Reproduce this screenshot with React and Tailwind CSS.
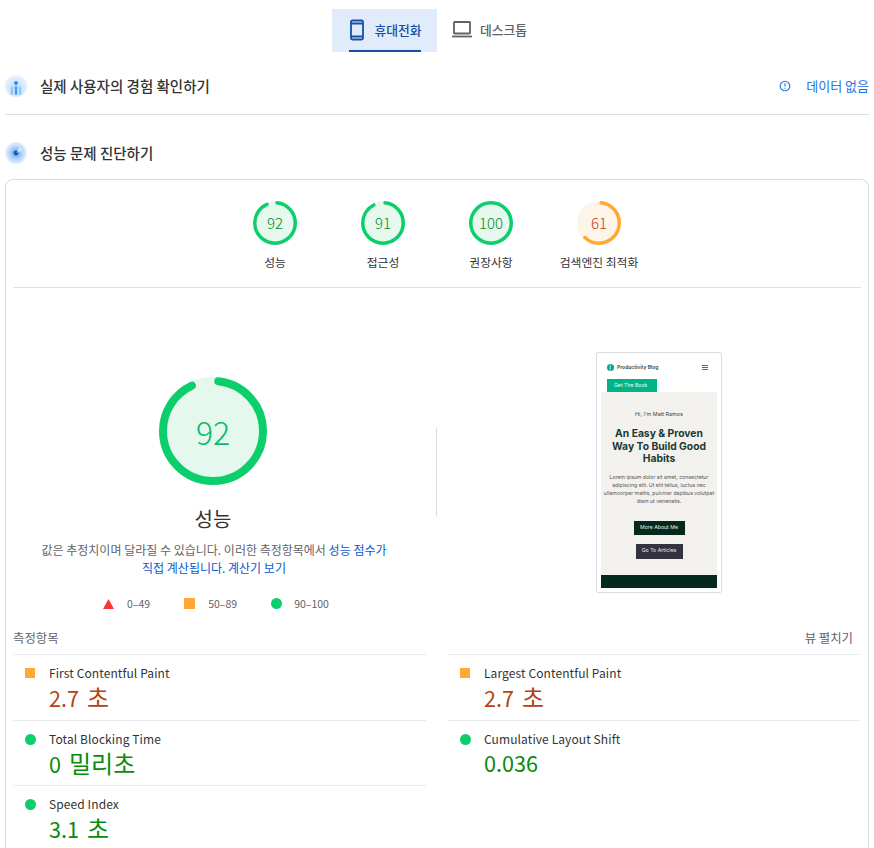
const Gauge = ({ score, size, stroke, color, fill, textClass }) => {
  const r = (size - stroke) / 2;
  const c = 2 * Math.PI * r;
  const full = score === 100;
  return (
    <div className="relative shrink-0" style={{ width: size, height: size }}>
      <svg width={size} height={size} className="-rotate-90">
        <circle cx={size / 2} cy={size / 2} r={r + stroke / 2} fill={fill} />
        <circle
          cx={size / 2}
          cy={size / 2}
          r={r}
          fill="none"
          stroke={color}
          strokeWidth={stroke}
          strokeLinecap="round"
          strokeDasharray={`${c * (full ? 1 : score / 100 - 0.008)} ${c}`}
          strokeDashoffset={full ? 0 : -c * 0.017}
        />
      </svg>
      <div className={`absolute inset-0 flex items-center justify-center ${textClass}`}>{score}</div>
    </div>
  );
};

const SmallScore = ({ score, label, color, fill, textColor }) => (
  <div className="flex flex-col items-center w-[108px]">
    <Gauge score={score} size={44} stroke={3.5} color={color} fill={fill} textClass={`text-[15px] font-light ${textColor}`} />
    <div className="mt-[9px] text-[11.8px] leading-[16px] text-[#333] whitespace-nowrap">{label}</div>
  </div>
);

const Square = () => <div className="w-[10px] h-[10px] bg-[#ffa933]" />;
const Dot = () => <div className="w-[11px] h-[11px] rounded-full bg-[#0cce6b]" />;

const Metric = ({ label, value, unit, good }) => (
  <div className="h-[65.5px] border-t border-[#e8eaed] pl-[12px] flex">
    <div className="w-[24px] pt-[13px] shrink-0">{good ? <Dot /> : <Square />}</div>
    <div className="pt-[9px]">
      <div className="text-[12px] leading-[18px] text-[#333] tracking-[0.1px]">{label}</div>
      <div className={`flex items-baseline leading-[30px] ${good ? "text-[#0a8a0a]" : "text-[#b5420f]"}`}>
        <span className="text-[21.6px]">{value}</span>
        {unit && <span className="ml-[8px] text-[24px]">{unit}</span>}
      </div>
    </div>
  </div>
);

const FieldIcon = () => (
  <svg width="22" height="22" viewBox="0 0 22 22" className="shrink-0">
    <defs>
      <radialGradient id="fieldBg" cx="50%" cy="60%" r="55%">
        <stop offset="0%" stopColor="#b5d8f8" />
        <stop offset="100%" stopColor="#e8f2fd" />
      </radialGradient>
    </defs>
    <circle cx="11" cy="11" r="11" fill="url(#fieldBg)" />
    <circle cx="11" cy="8" r="1.8" fill="#1a73e8" />
    <rect x="9.8" y="11" width="2.4" height="9" rx="1" fill="#4da0ee" />
    <rect x="5.8" y="12" width="2" height="8" rx="1" fill="#8cc3f4" />
    <rect x="14.2" y="12" width="2" height="8" rx="1" fill="#8cc3f4" />
  </svg>
);

const LabIcon = () => (
  <svg width="22" height="22" viewBox="0 0 22 22" className="shrink-0">
    <defs>
      <radialGradient id="labBg" cx="50%" cy="50%" r="50%">
        <stop offset="0%" stopColor="#5f9fef" />
        <stop offset="60%" stopColor="#b9d6f8" />
        <stop offset="100%" stopColor="#e8f2fd" />
      </radialGradient>
    </defs>
    <circle cx="11" cy="11" r="11" fill="url(#labBg)" />
    <circle cx="11" cy="11" r="2.4" fill="#1558c0" />
    <path d="M11 11 L15 5 A7 7 0 0 1 17 9 Z" fill="#ffffff" opacity="0.55" />
  </svg>
);

const PagePreview = () => (
  <div className="w-[126px] h-[241px] border border-[#dadce0] rounded-[2px] bg-white overflow-hidden shrink-0 flex flex-col px-[4px] font-['Inter',sans-serif]">
    <div className="h-[26px] shrink-0 flex items-center justify-between pl-[6px] pr-[9px] pt-[3px]">
      <div className="flex items-center gap-[3px]">
        <svg width="7" height="7" viewBox="0 0 7 7">
          <circle cx="3.5" cy="3.5" r="3.5" fill="#0aa37f" />
          <path d="M3.2 0.5v6" stroke="#fff" strokeWidth="0.7" />
        </svg>
        <span className="text-[5px] font-semibold text-[#2a4a43]">Productivity Blog</span>
      </div>
      <div className="w-[6px] flex flex-col gap-[1px]">
        <div className="h-[1px] bg-[#666]" />
        <div className="h-[1px] bg-[#666]" />
        <div className="h-[1px] bg-[#666]" />
      </div>
    </div>
    <div className="ml-[6px] w-[50px] h-[13px] shrink-0 bg-[#00b488] flex items-center pl-[7px] text-[5.2px] text-[#e6fff8]">Get The Book</div>
    <div className="h-[183px] shrink-0 bg-[#f3f1ed] flex flex-col items-center text-center">
      <div className="mt-[19px] text-[5.4px] leading-[6px] text-[#444]">Hi, I'm Matt Ramos</div>
      <div className="mt-[10px] text-[10.3px] leading-[12.5px] font-bold text-[#1a3a33] w-[110px]">An Easy &amp; Proven Way To Build Good Habits</div>
      <div className="mt-[8px] text-[5.2px] leading-[8px] text-[#555] w-[114px]">Lorem ipsum dolor sit amet, consectetur adipiscing elit. Ut elit tellus, luctus nec ullamcorper mattis, pulvinar dapibus volutpat diam ut venenatis.</div>
      <div className="mt-[16px] w-[51px] h-[14px] bg-[#06291f] text-[#e6eeeb] text-[5.2px] flex items-center justify-center">More About Me</div>
      <div className="mt-[9px] w-[47px] h-[15px] bg-[#333340] text-[#e6e6ea] text-[5.2px] flex items-center justify-center">Go To Articles</div>
    </div>
    <div className="h-[13px] shrink-0 bg-[#06291f]" />
  </div>
);

export default function App() {
  return (
    <div className="w-[874px] h-[848px] overflow-hidden bg-white font-['Noto_Sans_CJK_KR','Noto_Sans',sans-serif] text-[#202124]">
      <div className="flex justify-center pt-[9px]">
        <div className="w-[105px] h-[43px] bg-[#e1ecfa] flex flex-col items-center">
          <div className="flex-1 flex items-center gap-[9px] pl-[2px] text-[12.8px] font-medium text-[#174ea6]">
            <svg width="16" height="22" viewBox="0 0 16 22" fill="none" stroke="#174ea6" strokeWidth="1.8">
              <rect x="2" y="1.5" width="12" height="19" rx="1.5" />
              <path d="M2 4.5h12M2 17.5h12" />
            </svg>
            휴대전화
          </div>
          <div className="w-[72px] h-[2px] bg-[#174ea6]" />
        </div>
        <div className="w-[105px] h-[43px] flex items-center pl-[15px] gap-[8px] pb-[2px] text-[12.8px] font-medium text-[#5f6368]">
          <svg width="20" height="17" viewBox="0 0 20 17" fill="none" stroke="#5f6368" strokeWidth="1.8">
            <rect x="2" y="1" width="16" height="11.5" rx="0.5" />
            <path d="M0 15.5h20" />
          </svg>
          데스크톱
        </div>
      </div>

      <div className="mx-[5px]">
        <div className="h-[63px] flex items-center border-b border-[#dadce0] pt-[6px]">
          <FieldIcon />
          <div className="ml-[13px] text-[14.5px] font-medium text-[#333]">실제 사용자의 경험 확인하기</div>
          <div className="ml-auto flex items-center gap-[15px] text-[13px] text-[#1a73e8]">
            <svg width="12" height="12" viewBox="0 0 12 12" fill="none" stroke="#1a73e8" strokeWidth="1.1">
              <circle cx="6" cy="6" r="4.8" />
              <path d="M6 3.2v3.4M6 7.8v1" />
            </svg>
            데이터 없음
          </div>
        </div>
        <div className="h-[64px] flex items-center pt-[12px]">
          <LabIcon />
          <div className="ml-[13px] text-[14.5px] font-medium text-[#333]">성능 문제 진단하기</div>
        </div>

        <div className="h-[800px] border border-[#dadce0] rounded-[8px] px-[7px] pt-[21px]">
          <div className="h-[87px] border-b border-[#e0e0e0] flex justify-center">
            <div className="flex">
              <SmallScore score={92} label="성능" color="#0cce6b" fill="#e7f9ef" textColor="text-[#0a8a0a]" />
              <SmallScore score={91} label="접근성" color="#0cce6b" fill="#e7f9ef" textColor="text-[#0a8a0a]" />
              <SmallScore score={100} label="권장사항" color="#0cce6b" fill="#e7f9ef" textColor="text-[#0a8a0a]" />
              <SmallScore score={61} label="검색엔진 최적화" color="#ffa933" fill="#fff4e8" textColor="text-[#b5420f]" />
            </div>
          </div>

          <div className="h-[342px] flex">
            <div className="w-[400px] flex flex-col items-center pt-[89px] shrink-0">
              <Gauge score={92} size={108} stroke={8} color="#0cce6b" fill="#e5f8ee" textClass="text-[32px] font-light text-[#0cb868]" />
              <div className="mt-[19px] text-[20px] leading-[30px] text-[#333]">성능</div>
              <div className="mt-[7px] pl-[2px] text-center text-[12px] leading-[18px] text-[#5f6368] whitespace-nowrap">
                <div>값은 추정치이며 달라질 수 있습니다. 이러한 측정항목에서 <span className="text-[#0b57d0]">성능 점수가</span></div>
                <div className="text-[#0b57d0]">직접 계산됩니다. 계산기 보기</div>
              </div>
              <div className="mt-[19px] ml-[6px] flex items-center text-[10.5px] text-[#5f6368]">
                <svg width="11" height="10" viewBox="0 0 11 10" className="mr-[13px]"><path d="M5.5 0L11 10H0z" fill="#f33" /></svg>
                <span className="mr-[34px]">0–49</span>
                <div className="w-[11px] h-[11px] bg-[#ffa933] mr-[13px]" />
                <span className="mr-[34px]">50–89</span>
                <div className="w-[11px] h-[11px] rounded-full bg-[#0cce6b] mr-[12px]" />
                <span>90–100</span>
              </div>
            </div>
            <div className="w-px h-[88px] bg-[#dadce0] mt-[140px] ml-[23px] shrink-0" />
            <div className="ml-[159px] mt-[64px]">
              <PagePreview />
            </div>
          </div>

          <div className="flex justify-between items-center h-[16px] text-[12.4px] text-[#5f6368] pr-[8px]">
            <span>측정항목</span>
            <span>뷰 펼치기</span>
          </div>
          <div className="mt-[8px] grid grid-cols-[413px_412px] gap-x-[22px]">
            <div>
              <Metric label="First Contentful Paint" value="2.7" unit="초" />
              <Metric label="Total Blocking Time" value="0" unit="밀리초" good />
              <Metric label="Speed Index" value="3.1" unit="초" good />
            </div>
            <div>
              <Metric label="Largest Contentful Paint" value="2.7" unit="초" />
              <Metric label="Cumulative Layout Shift" value="0.036" good />
            </div>
          </div>
        </div>
      </div>
    </div>
  );
}
